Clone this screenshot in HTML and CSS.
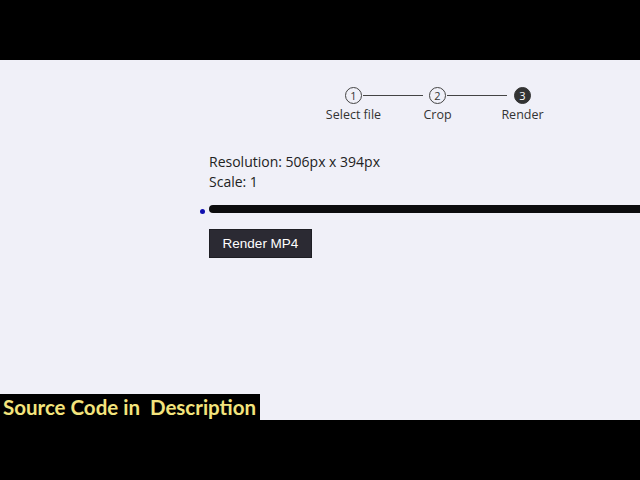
FILE: index.html
```html
<!DOCTYPE html>
<html>
<head>
<meta charset="utf-8">
<link rel="stylesheet" href="styles.css">
</head>
<body>
<div class="bar"></div>
<main class="main">
  <div class="stepper">
    <div class="step">
      <div class="circle">1</div>
      <div class="label">Select file</div>
    </div>
    <div class="line line-a"></div>
    <div class="step">
      <div class="circle">2</div>
      <div class="label">Crop</div>
    </div>
    <div class="line line-b"></div>
    <div class="step">
      <div class="circle active">3</div>
      <div class="label">Render</div>
    </div>
  </div>
  <div class="content">
    <div class="info">Resolution: 506px x 394px</div>
    <div class="info">Scale: 1</div>
    <div class="progress-row">
      <span class="dot"></span>
      <div class="progress"></div>
    </div>
    <button class="btn">Render MP4</button>
  </div>
</main>
<div class="bar"></div>
<div class="caption">Source Code in&nbsp; Description</div>
</body>
</html>
```
FILE: styles.css
```css
html, body {
  margin: 0;
  padding: 0;
  background: #000;
  overflow: hidden;
}
body {
  width: 640px;
  height: 480px;
  position: relative;
}
.bar {
  height: 60px;
  background: #000;
}
.main {
  height: 360px;
  background: #f0f0f8;
  font-family: "Open Sans", "Noto Sans", sans-serif;
  color: #222;
  overflow: hidden;
}
.stepper {
  display: flex;
  align-items: flex-start;
  padding-top: 27px;
  padding-left: 345px;
}
.step {
  width: 17px;
  display: flex;
  flex-direction: column;
  align-items: center;
}
.circle {
  width: 15px;
  height: 15px;
  border: 1px solid #444;
  border-radius: 50%;
  font-size: 11px;
  line-height: 15px;
  text-align: center;
  color: #333;
  background: transparent;
}
.circle.active {
  background: #333;
  border-color: #333;
  color: #fff;
}
.label {
  white-space: nowrap;
  font-size: 12.5px;
  line-height: 17px;
  margin-top: 2px;
  color: #333;
}
.line {
  height: 1px;
  background: #444;
  width: 60px;
  margin-top: 8px;
}
.line-a {
  margin-left: 1px;
  margin-right: 6px;
}
.line-b {
  margin-left: 1px;
  margin-right: 7px;
}
.content {
  margin-left: 209px;
  margin-top: 29px;
}
.info {
  font-size: 14px;
  line-height: 20px;
  color: #222;
}
.progress-row {
  display: flex;
  align-items: center;
  margin-top: 11px;
  margin-left: -9px;
  width: 460px;
}
.dot {
  width: 5px;
  height: 5px;
  border-radius: 50%;
  background: #1010b0;
  margin-top: 6px;
  margin-right: 4px;
  flex: none;
}
.progress {
  flex: 1;
  height: 8px;
  background: #0c0c0e;
  border-radius: 4px 0 0 4px;
}
.btn {
  display: block;
  margin-top: 15px;
  width: 103px;
  height: 29px;
  background: #2b2a33;
  color: #fff;
  border: 1px solid #1e1e24;
  border-radius: 0;
  font-family: "Liberation Sans", Arial, sans-serif;
  font-size: 13.5px;
  padding: 0;
}
.caption {
  position: absolute;
  left: 0;
  top: 394px;
  width: 260px;
  height: 26px;
  background: #000;
  color: #f3e47c;
  font-family: Lato, "Open Sans", sans-serif;
  font-weight: 700;
  font-size: 20.5px;
  line-height: 26px;
  padding-left: 3px;
  box-sizing: border-box;
  white-space: nowrap;
}
```
